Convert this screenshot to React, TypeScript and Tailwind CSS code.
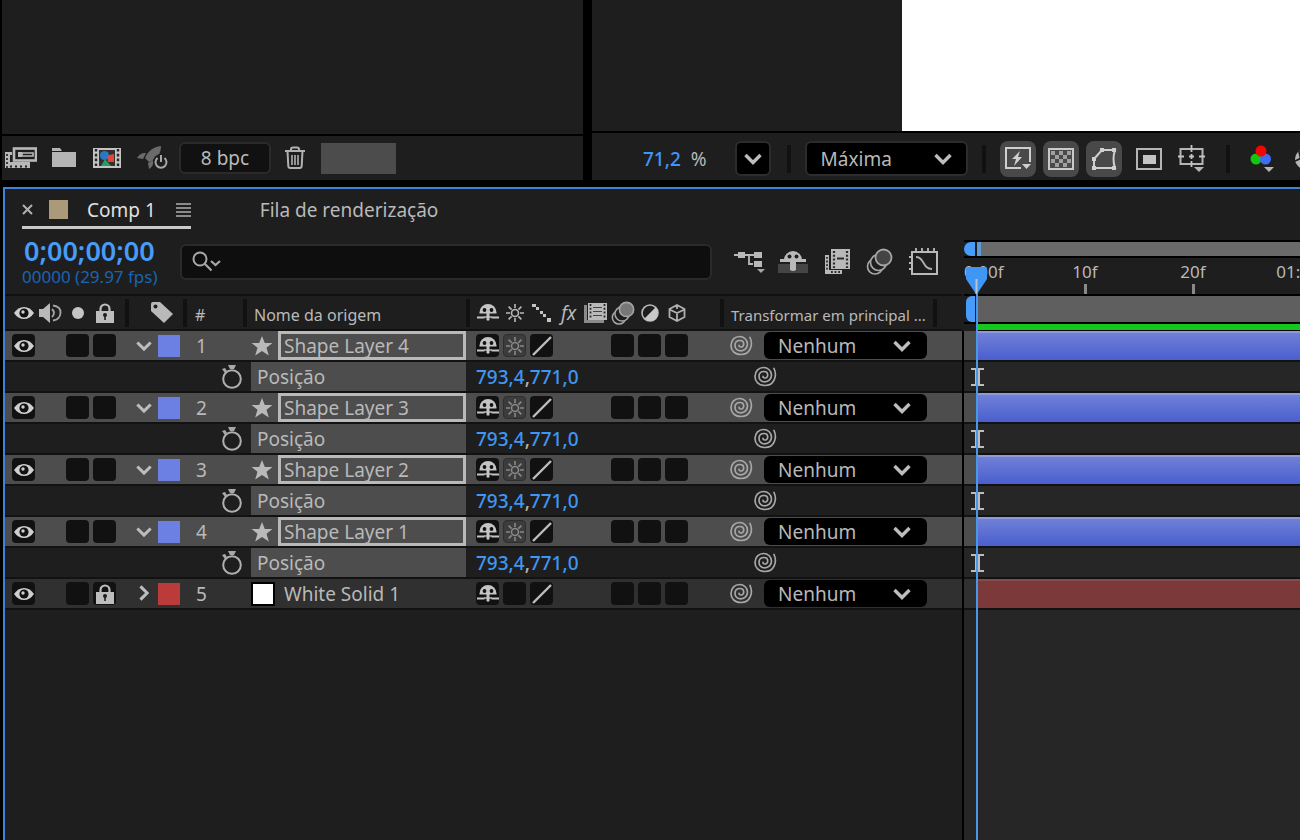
import type { ReactNode } from "react";
import { clsx } from "clsx";

type Layer = {
  id: number;
  name: string;
  kind: "shape" | "solid";
  locked?: boolean;
  position?: [string, string];
};

const LAYERS: Layer[] = [
  { id: 1, name: "Shape Layer 4", kind: "shape", position: ["793,4", "771,0"] },
  { id: 2, name: "Shape Layer 3", kind: "shape", position: ["793,4", "771,0"] },
  { id: 3, name: "Shape Layer 2", kind: "shape", position: ["793,4", "771,0"] },
  { id: 4, name: "Shape Layer 1", kind: "shape", position: ["793,4", "771,0"] },
  { id: 5, name: "White Solid 1", kind: "solid", locked: true },
];

/* ---------- icons ---------- */

function Icon({ w, h, children }: { w: number; h: number; children: ReactNode }) {
  return (
    <svg width={w} height={h} viewBox={`0 0 ${w} ${h}`} fill="none" className="shrink-0" aria-hidden="true">
      {children}
    </svg>
  );
}

function InterpretIcon() {
  return (
    <Icon w={32} h={22}>
      <path d="M0 5h7v3H5v7h3v4H0zM0 15h25v6H0z" fill="#b9b9b9" />
      <path d="M2 7v14" stroke="#1e1e1e" strokeWidth="1.600" strokeDasharray="2 2" />
      <path d="M5 19.500h18" stroke="#1e1e1e" strokeWidth="2" strokeDasharray="2 3" />
      <rect x="9" y="1.500" width="22" height="12" fill="#1e1e1e" stroke="#b9b9b9" strokeWidth="2.600" />
      <path d="M13 5h4v5h-4z" fill="#b9b9b9" />
      <path d="M17 6h11v3H17z" stroke="#b9b9b9" strokeWidth="1.600" />
    </Icon>
  );
}

function FolderIcon() {
  return (
    <Icon w={26} h={20}>
      <path d="M1 0h8l2 3H1zM1 4h24v15H1z" fill="#b5b5b5" />
    </Icon>
  );
}

function NewCompIcon() {
  return (
    <Icon w={28} h={20}>
      <path d="M0 0h28v20H0z" fill="#c4c4c4" />
      <path d="M3 1v18M25 1v18" stroke="#252525" strokeWidth="2.400" strokeDasharray="2.600 2.200" />
      <path d="M6 2h16v16H6z" fill="#303030" />
      <path d="M12 11l6 7H8z" fill="#1fa06a" />
      <circle cx="11.500" cy="7.500" r="4.600" fill="#2b78c2" />
      <path d="M14 7.500l7-1.500v8h-6z" fill="#e2463a" />
    </Icon>
  );
}

function RocketIcon() {
  return (
    <Icon w={32} h={26}>
      <path d="M24 1c-8 1-13 5-16 12l4 4c8-3 12-8 12-16z" fill="#6b6b6b" />
      <path d="M9 8c-5 0-7 2-9 5l6 1zM11 18l5-3c1 5-1 7-4 9z" fill="#6b6b6b" />
      <circle cx="24" cy="17" r="8" fill="#1e1e1e" />
      <path d="M20.500 13a5.500 5.500 0 1 0 7 0M24 10v7" stroke="#a8a8a8" strokeWidth="2" />
    </Icon>
  );
}

function TrashIcon() {
  return (
    <Icon w={20} h={24}>
      <path d="M0 5h20M6 5V3q0-1.500 2-1.500h4q2 0 2 1.500v2M2.500 5l.8 15q.1 2 2 2h9.400q1.900 0 2-2l.8-15" stroke="#b0b0b0" strokeWidth="2" />
      <path d="M7 9v10M10 9v10M13 9v10" stroke="#b0b0b0" strokeWidth="1.600" />
    </Icon>
  );
}

function Chevron({ w = 18 }: { w?: number }) {
  return (
    <svg width={w} height={12} viewBox="0 0 18 12" fill="none" className="shrink-0" aria-hidden="true">
      <path d="M1.500 2l7.500 7.500L16.500 2" stroke="#bdbdbd" strokeWidth="3.400" />
    </svg>
  );
}

function FastPreviewIcon() {
  return (
    <Icon w={28} h={26}>
      <path d="M17 22H2V2h24v14" stroke="#cfcfcf" strokeWidth="2" />
      <path d="M16 5l-8 8h4l-2 7 8-9h-4z" fill="#cfcfcf" />
      <path d="M18 18h9l-4.500 5z" fill="#cfcfcf" />
    </Icon>
  );
}

function CheckerIcon() {
  return (
    <Icon w={26} h={22}>
      <rect x="1" y="1" width="24" height="20" fill="#4a4a4a" stroke="#c9c9c9" strokeWidth="2" />
      <path
        d="M3 3h4v4H3zM11 3h4v4h-4zM19 3h4v4h-4zM7 7h4v4H7zM15 7h4v4h-4zM3 11h4v4H3zM11 11h4v4h-4zM19 11h4v4h-4zM7 15h4v4H7zM15 15h4v4h-4z"
        fill="#a0a0a0"
      />
    </Icon>
  );
}

function MaskIcon() {
  return (
    <Icon w={26} h={24}>
      <path d="M3 21V12L11 3h13q-3 9 0 18z" stroke="#cfcfcf" strokeWidth="2" />
      <path d="M1 10h4v4H1zM9 1h4v4H9zM21 1h4v4h-4zM1 19h4v4H1zM21 19h4v4h-4z" fill="#cfcfcf" />
    </Icon>
  );
}

function RegionIcon() {
  return (
    <Icon w={26} h={22}>
      <rect x="1" y="1" width="24" height="20" stroke="#b5b5b5" strokeWidth="2" />
      <path d="M7 7h13v9H7z" fill="#c4c4c4" />
    </Icon>
  );
}

function GridGuideIcon() {
  return (
    <Icon w={28} h={28}>
      <rect x="2.500" y="4" width="22" height="15" stroke="#b5b5b5" strokeWidth="2" />
      <path d="M13.500 0v7M13.500 16v6M0 11.500h6M21 11.500h6M13.500 9v5M11 11.500h5" stroke="#c4c4c4" strokeWidth="1.800" />
      <path d="M16 22h10l-5 5z" fill="#b5b5b5" />
    </Icon>
  );
}

function ChannelsIcon() {
  return (
    <Icon w={24} h={28}>
      <circle cx="6" cy="14" r="5.500" fill="#12c60e" />
      <circle cx="15.500" cy="14" r="5.500" fill="#3f6df2" />
      <circle cx="11" cy="6" r="5.500" fill="#f40505" />
      <path d="M14 22h10l-5 5z" fill="#b5b5b5" />
    </Icon>
  );
}

function ApertureIcon() {
  return (
    <Icon w={22} h={22}>
      <circle cx="11" cy="11" r="10" fill="#b5b5b5" />
      <path d="M1 13l11-5M5 3l3 14M12 1l8 8" stroke="#1e1e1e" strokeWidth="1.800" />
    </Icon>
  );
}

function FlowIcon() {
  return (
    <Icon w={32} h={26}>
      <path d="M0 6h26M15 6v9h4" stroke="#b9b9b9" strokeWidth="1.800" />
      <path d="M4 3h7v6H4zM20 3h8v6h-8zM20 12h8v6h-8z" fill="#b9b9b9" />
      <path d="M23 20h8l-4 4z" fill="#a5a5a5" />
    </Icon>
  );
}

function ShyLargeIcon() {
  return (
    <Icon w={30} h={26}>
      <path d="M0 15h30v9H0z" fill="#454545" />
      <path d="M2 10h26v3H2z" fill="#b9b9b9" />
      <path d="M6 11a9 9 0 0 1 18 0z" fill="#b9b9b9" />
      <path d="M12 10h6v11q-3 2-6 0z" fill="#b9b9b9" />
      <circle cx="11.500" cy="7.500" r="2" fill="#1e1e1e" />
      <circle cx="18.500" cy="7.500" r="2" fill="#1e1e1e" />
    </Icon>
  );
}

function FrameBlendLargeIcon() {
  return (
    <Icon w={26} h={26}>
      <path d="M1 6h4v15h13v4H1z" fill="#b9b9b9" />
      <path d="M3 8v14M7 23h10" stroke="#2a2a2a" strokeWidth="1.800" strokeDasharray="1.800 1.800" />
      <path d="M7 0h19v20H7z" fill="#b9b9b9" />
      <path d="M10 2v17M23 2v17" stroke="#2a2a2a" strokeWidth="2.200" strokeDasharray="2 1.800" />
      <path d="M13 9.500h7" stroke="#2a2a2a" strokeWidth="2" />
    </Icon>
  );
}

function MotionBlurIcon({ size = 27 }: { size?: number }) {
  return (
    <svg width={size} height={size} viewBox="0 0 27 27" fill="none" className="shrink-0" aria-hidden="true">
      <circle cx="9" cy="18.500" r="7.500" fill="#1e1e1e" stroke="#a5a5a5" strokeWidth="1.700" />
      <circle cx="12.500" cy="14.500" r="8" fill="#1e1e1e" stroke="#a5a5a5" strokeWidth="1.700" />
      <circle cx="17.500" cy="9.500" r="8" fill={size > 25 ? "#444444" : "#777777"} stroke="#a5a5a5" strokeWidth="1.800" />
    </svg>
  );
}

function GraphIcon() {
  return (
    <Icon w={30} h={28}>
      <path d="M3 4h25v22H3z" stroke="#b9b9b9" strokeWidth="2" />
      <path d="M7 0v4M13 0v4M19 0v4M25 0v4M0 9h3M0 15h3M0 21h3" stroke="#b9b9b9" strokeWidth="1.800" />
      <path d="M7 9c9 0 6 12 16 12" stroke="#b0b0b0" strokeWidth="1.800" />
    </Icon>
  );
}

function EyeIcon() {
  return (
    <Icon w={20} h={14}>
      <path d="M0 7q4-6 10-6t10 6q-4 6-10 6T0 7z" fill="#cfcfcf" />
      <circle cx="10" cy="7" r="4.600" fill="#111111" />
      <circle cx="9" cy="6" r="1.700" fill="#cfcfcf" />
    </Icon>
  );
}

function SpeakerIcon() {
  return (
    <Icon w={23} h={20}>
      <path d="M0 6h4l7-6v20l-7-6H0z" fill="#b9b9b9" />
      <path d="M13 6q4 4 0 8M14 2.500q8 1 7.500 7.500T14 17.500" stroke="#a5a5a5" strokeWidth="1.800" />
    </Icon>
  );
}

function LockIcon() {
  return (
    <Icon w={18} h={20}>
      <path d="M4.500 9V6a4.500 4.500 0 0 1 9 0v3" stroke="#bdbdbd" strokeWidth="2.200" />
      <path d="M0 8h18v12H0z" fill="#bdbdbd" />
      <circle cx="9" cy="12" r="2" fill="#1e1e1e" />
      <path d="M8.200 12h1.600v5H8.200z" fill="#1e1e1e" />
    </Icon>
  );
}

function TagIcon() {
  return (
    <Icon w={22} h={22}>
      <path d="M0 2q0-2 2-2h7l13 12-9 9L0 9z" fill="#b9b9b9" />
      <circle cx="4.500" cy="4.500" r="2" fill="#1e1e1e" />
    </Icon>
  );
}

function ShyIcon() {
  return (
    <Icon w={22} h={18}>
      <path d="M2.500 8.500a8.500 8.500 0 0 1 17 0v1h-17z" fill="#c4c4c4" />
      <path d="M0 13.500h7.500M14.500 13.500H22" stroke="#c4c4c4" strokeWidth="2" />
      <path d="M7 13h8" stroke="#c4c4c4" strokeWidth="1.400" />
      <path d="M9.500 7h3v9q-1.500 1.500-3 0z" fill="#c4c4c4" />
      <circle cx="7.500" cy="6" r="1.900" fill="#111111" />
      <circle cx="14.500" cy="6" r="1.900" fill="#111111" />
    </Icon>
  );
}

function SunIcon({ dim }: { dim?: boolean }) {
  return (
    <Icon w={18} h={18}>
      <g stroke={dim ? "#888888" : "#b9b9b9"} strokeWidth="1.600">
        <circle cx="9" cy="9" r="3.500" />
        <path d="M9 0v4M9 14v4M0 9h4M14 9h4M2.600 2.600l3 3M12.400 12.400l3 3M2.600 15.400l3-3M12.400 5.600l3-3" />
      </g>
    </Icon>
  );
}

function DottedIcon() {
  return (
    <Icon w={20} h={18}>
      <path d="M0 0h4v3H0zM4 3h3v3H4zM8 7h3v3H8zM11 10h3v3h-3zM15 14h4v4h-4z" fill="#c4c4c4" />
    </Icon>
  );
}

function FrameBlendIcon() {
  return (
    <Icon w={23} h={20}>
      <path d="M0 2h3v15h17v3H0z" fill="#8a8a8a" />
      <path d="M4 0h19v17H4z" fill="#b9b9b9" />
      <path d="M6.500 1v15M20.500 1v15" stroke="#2a2a2a" strokeWidth="1.800" strokeDasharray="2 1.800" />
      <path d="M9 4.500h9M9 8.500h9M9 12.500h9" stroke="#444444" strokeWidth="1.200" />
    </Icon>
  );
}

function AdjustmentIcon() {
  return (
    <Icon w={18} h={18}>
      <circle cx="9" cy="9" r="8" stroke="#b9b9b9" strokeWidth="1.600" />
      <path d="M3.300 14.700A8 8 0 0 0 14.700 3.300z" fill="#c9c9c9" />
    </Icon>
  );
}

function CubeIcon() {
  return (
    <Icon w={18} h={18}>
      <path d="M9 1l7.500 4v8L9 17l-7.500-4V5zM1.500 5.500L9 9l7.500-3.500M9 9v8M9 1v4" stroke="#b0b0b0" strokeWidth="1.800" />
    </Icon>
  );
}

function SpiralIcon() {
  return (
    <Icon w={23} h={21}>
      <path
        d="M20 2.500C23.500 10 20 19.500 11 19.500 4.500 19.500 1 15.500 1 10.500 1 5 5 1.500 9.500 1.500 14 1.500 17.500 5 17.500 9 17.500 13 14.500 15.800 11 15.800 7.500 15.800 5 13.500 5 10.500 5 7.500 7 5.500 10 5.500 12.300 5.500 13.700 7.200 13.700 9 13.700 11 12.200 12.100 10.500 12 9.500 11.900 9 11.200 9 10.300"
        stroke="#a8a8a8"
        strokeWidth="1.700"
        strokeLinecap="round"
      />
    </Icon>
  );
}

function StopwatchIcon() {
  return (
    <Icon w={22} h={26}>
      <circle cx="11" cy="15" r="8.800" stroke="#b0b0b0" strokeWidth="2" />
      <path d="M7 1h8l-2 4h-4zM1 5l3-1 2 3-2 2z" fill="#a8a8a8" />
    </Icon>
  );
}

function StarIcon() {
  return (
    <Icon w={22} h={22}>
      <path d="M11 1l2.800 7H21.500l-6 4.800L17.800 20.500 11 16 4.200 20.500l2.300-7.700L.5 8h7.700z" fill="#b9b9b9" />
    </Icon>
  );
}

/* ---------- small shared pieces ---------- */

function Divider() {
  return <span className="h-7 w-1 shrink-0 bg-[#111111]" />;
}

function Cell({ children }: { children?: ReactNode }) {
  return <span className="flex w-[27px] shrink-0 items-center justify-center">{children}</span>;
}

function Toggle({ label, dim, children }: { label: string; dim?: boolean; children?: ReactNode }) {
  return (
    <Cell>
      <button
        type="button"
        aria-label={label}
        className={clsx(
          "flex size-[23px] items-center justify-center rounded-sm",
          dim ? "border border-[#2e2e2e] bg-[#3c3c3c]" : "bg-[#111111]",
        )}
      >
        {children}
      </button>
    </Cell>
  );
}

/* ---------- top panels ---------- */

function ProjectPanel() {
  return (
    <section className="flex flex-col bg-[#1e1e1e]">
      <div className="h-[134px]" />
      <div className="flex flex-1 items-center border-t-2 border-black pl-[3px]">
        <button type="button" aria-label="Interpretar gravação">
          <InterpretIcon />
        </button>
        <button type="button" aria-label="Nova pasta" className="ml-3.5">
          <FolderIcon />
        </button>
        <button type="button" aria-label="Nova composição" className="ml-4">
          <NewCompIcon />
        </button>
        <button type="button" aria-label="Aceleração" className="ml-4">
          <RocketIcon />
        </button>
        <button type="button" className="ml-2.5 h-8 w-[92px] rounded-md border-2 border-[#2a2a2a] bg-[#111111] leading-6">
          8 bpc
        </button>
        <button type="button" aria-label="Excluir" className="ml-3.5">
          <TrashIcon />
        </button>
        <span className="ml-4 h-[31px] w-[75px] bg-[#4c4c4c]" />
      </div>
    </section>
  );
}

function ViewerPanel() {
  return (
    <section className="flex flex-col overflow-hidden bg-[#1e1e1e]">
      <div className="flex h-[131px]">
        <div className="w-[310px] shrink-0" />
        <div className="flex-1 bg-white" />
      </div>
      <div className="flex flex-1 items-center whitespace-nowrap border-t-2 border-black pl-[51px] pt-1">
        <span className="font-medium text-[#3f96f5]">71,2</span>
        <span className="ml-2.5 w-[18px]">%</span>
        <button
          type="button"
          aria-label="Ampliação"
          className="ml-7 flex h-[35px] w-9 shrink-0 items-center justify-center rounded-md border-2 border-[#2c2c2c] bg-black"
        >
          <Chevron />
        </button>
        <span className="ml-4 flex">
          <Divider />
        </span>
        <span className="relative ml-3.5 flex w-[163px] shrink-0 items-center">
          <select
            aria-label="Resolução"
            className="h-[35px] w-full appearance-none rounded-md border-2 border-[#2c2c2c] bg-black px-3.5"
          >
            <option>Máxima</option>
          </select>
          <span className="pointer-events-none absolute right-4">
            <Chevron />
          </span>
        </span>
        <span className="ml-3.5 flex">
          <Divider />
        </span>
        <span className="ml-3.5 flex items-center gap-[7px]">
          {[
            { label: "Visualização rápida", icon: <FastPreviewIcon /> },
            { label: "Grade de transparência", icon: <CheckerIcon /> },
            { label: "Máscara e forma", icon: <MaskIcon /> },
          ].map((b) => (
            <button
              key={b.label}
              type="button"
              aria-label={b.label}
              className="flex size-9 items-center justify-center rounded-lg bg-[#494949]"
            >
              {b.icon}
            </button>
          ))}
        </span>
        <button type="button" aria-label="Região de interesse" className="ml-3.5">
          <RegionIcon />
        </button>
        <button type="button" aria-label="Grade e guias" className="ml-4">
          <GridGuideIcon />
        </button>
        <span className="ml-5 flex">
          <Divider />
        </span>
        <button type="button" aria-label="Canais" className="ml-5">
          <ChannelsIcon />
        </button>
        <button type="button" aria-label="Exposição" className="ml-5">
          <ApertureIcon />
        </button>
      </div>
    </section>
  );
}

/* ---------- timeline ---------- */

function TimelineTabs() {
  return (
    <nav className="flex h-11 pl-[17px]">
      <div className="flex h-10 items-center border-b-[3px] border-[#c9c9c9] pt-1">
        <button type="button" aria-label="Fechar">
          <Icon w={11} h={11}>
            <path d="M1 1l9 9M10 1l-9 9" stroke="#b0b0b0" strokeWidth="2" />
          </Icon>
        </button>
        <span className="ml-4 size-[19px] bg-[#ab9a7a]" />
        <a href="#comp" className="ml-[19px] text-[#e0e0e0]">
          Comp 1
        </a>
        <button type="button" aria-label="Menu do painel" className="ml-5">
          <Icon w={15} h={14}>
            <path d="M0 1h15M0 5h15M0 9h15M0 13h15" stroke="#b0b0b0" strokeWidth="1.600" />
          </Icon>
        </button>
      </div>
      <a href="#render" className="ml-[69px] flex h-10 items-center border-b-[3px] border-transparent pt-1">
        Fila de renderização
      </a>
    </nav>
  );
}

function TimelineTools() {
  return (
    <div className="flex h-[63px] items-center border-b-2 border-[#111111] pb-1 pr-[23px]">
      <div className="w-[175px] shrink-0 whitespace-nowrap pl-[17px] pt-0.5">
        <div className="pl-0.5 text-[27px] font-semibold leading-7 text-[#469cf8]">0;00;00;00</div>
        <div className="text-[17px] leading-6 text-[#1a64b4]">00000 (29.97 fps)</div>
      </div>
      <label className="flex h-9 flex-1 items-center rounded-md border-2 border-[#2a2a2a] bg-[#0e0e0e] pl-2.5">
        <Icon w={30} h={22}>
          <circle cx="8" cy="8" r="6.500" stroke="#a8a8a8" strokeWidth="2" />
          <path d="M12.500 12.500l7 7M19 10l4.500 4 4.500-4" stroke="#a8a8a8" strokeWidth="2.200" />
        </Icon>
        <input type="text" aria-label="Pesquisar" className="ml-2 min-w-0 flex-1 bg-transparent outline-none" />
      </label>
      <div className="ml-[22px] flex shrink-0 items-center gap-3">
        <button type="button" aria-label="Minifluxograma">
          <FlowIcon />
        </button>
        <button type="button" aria-label="Ocultar tímidas">
          <ShyLargeIcon />
        </button>
        <button type="button" aria-label="Mesclagem de quadros" className="ml-1">
          <FrameBlendLargeIcon />
        </button>
        <button type="button" aria-label="Desfoque de movimento" className="ml-1">
          <MotionBlurIcon />
        </button>
        <button type="button" aria-label="Editor de gráfico" className="ml-1">
          <GraphIcon />
        </button>
      </div>
    </div>
  );
}

const HEAD = "h-[35px] border-b-2 border-[#111111] p-0 text-left font-normal";

function LayerHead() {
  return (
    <thead className="text-base leading-6">
      <tr>
        <th className={HEAD}>
          <div className="flex items-center pl-[5px]">
            <Cell><EyeIcon /></Cell>
            <Cell><SpeakerIcon /></Cell>
            <Cell>
              <span className="size-3 rounded-full bg-[#c4c4c4]" />
            </Cell>
            <Cell><LockIcon /></Cell>
          </div>
        </th>
        <th className={HEAD}>
          <div className="flex items-center gap-[22px]">
            <Divider />
            <TagIcon />
          </div>
        </th>
        <th className={HEAD}>
          <div className="flex items-center gap-2">
            <Divider />
            <span className="pt-1">#</span>
          </div>
        </th>
        <th className={HEAD}>
          <div className="flex items-center gap-[7px]">
            <Divider />
            <span className="pt-1">Nome da origem</span>
          </div>
        </th>
        <th className={HEAD}>
          <div className="flex items-center">
            <Divider />
            <div className="flex items-center pl-1">
              <Cell><ShyIcon /></Cell>
              <Cell><SunIcon /></Cell>
              <Cell><DottedIcon /></Cell>
              <Cell><span className="text-[19px] italic">fx</span></Cell>
              <Cell><FrameBlendIcon /></Cell>
              <Cell><MotionBlurIcon size={24} /></Cell>
              <Cell><AdjustmentIcon /></Cell>
              <Cell><CubeIcon /></Cell>
            </div>
          </div>
        </th>
        <th className={HEAD}>
          <div className="flex items-center gap-[7px] whitespace-nowrap text-[15px]">
            <Divider />
            <span className="pt-1">Transformar em principal ...</span>
            <Divider />
          </div>
        </th>
      </tr>
    </thead>
  );
}

function LayerRow({ layer }: { layer: Layer }) {
  const shape = layer.kind === "shape";
  const td = "h-[31px] border-b-2 border-[#121212] p-0";
  return (
    <>
      <tr className={shape ? "bg-[#4d4d4d]" : "bg-[#303030]"}>
        <td className={td}>
          <div className="flex pl-[5px]">
            <Toggle label="Visível"><EyeIcon /></Toggle>
            <Cell />
            <Toggle label="Solo" />
            <Toggle label="Bloquear">{layer.locked && <LockIcon />}</Toggle>
          </div>
        </td>
        <td className={td}>
          <div className="flex items-center pl-2.5">
            <button
              type="button"
              aria-label="Expandir"
              className={clsx("flex w-[18px]", shape ? "justify-center" : "-rotate-90 justify-end")}
            >
              <Chevron w={16} />
            </button>
            <span className={clsx("ml-[5px] size-[22px]", shape ? "bg-[#6c80e4]" : "bg-[#bb3a3a]")} />
          </div>
        </td>
        <td className={clsx(td, "pl-[13px]")}>{layer.id}</td>
        <td className={td}>
          <div className="flex h-[29px] items-center pl-2">
            {shape ? <StarIcon /> : <span className="size-6 border-2 border-black bg-white" />}
            <span
              className={clsx(
                "ml-[5px] flex h-[29px] flex-1 items-center",
                shape ? "border-[3px] border-[#b9b9b9] pl-[3px]" : "pl-1",
              )}
            >
              {layer.name}
            </span>
          </div>
        </td>
        <td className={td}>
          <div className="flex pl-2">
            <Toggle label="Tímida"><ShyIcon /></Toggle>
            {shape ? <Toggle label="Recolher" dim><SunIcon dim /></Toggle> : <Toggle label="Recolher" />}
            <Toggle label="Qualidade">
              <Icon w={20} h={20}>
                <path d="M1 19L19 1" stroke="#bdbdbd" strokeWidth="2.400" />
              </Icon>
            </Toggle>
            <Cell />
            <Cell />
            <Toggle label="Desfoque de movimento" />
            <Toggle label="Camada de ajuste" />
            <Toggle label="Camada 3D" />
          </div>
        </td>
        <td className={td}>
          <div className="flex items-center pl-2.5">
            <SpiralIcon />
            <span className="relative ml-[11px] flex w-[163px] items-center">
              <select
                aria-label={`Principal de ${layer.name}`}
                className="h-[27px] w-full appearance-none rounded-md bg-black px-3.5 leading-6"
              >
                <option>Nenhum</option>
              </select>
              <span className="pointer-events-none absolute right-4">
                <Chevron />
              </span>
            </span>
          </div>
        </td>
      </tr>
      {layer.position && (
        <tr>
          <td className={td} />
          <td className={td} />
          <td className={td}>
            <div className="flex items-center gap-[19px] pl-[19px]">
              <span className="size-0.5 bg-[#3a3a3a]" />
              <StopwatchIcon />
            </div>
          </td>
          <td className={td}>
            <div className="ml-2 flex h-[29px] items-center bg-[#4d4d4d] pl-1.5">Posição</div>
          </td>
          <td className={clsx(td, "pl-2.5 font-medium text-[#3f96f5]")}>
            {layer.position[0]}
            <span className="text-[#c4b0a0]">,</span>
            {layer.position[1]}
          </td>
          <td className={clsx(td, "pl-[34px]")}>
            <SpiralIcon />
          </td>
        </tr>
      )}
    </>
  );
}

function LayerTable() {
  return (
    <table className="w-full table-fixed border-separate border-spacing-0">
      <colgroup>
        <col className="w-[120px]" />
        <col className="w-[58px]" />
        <col className="w-[60px]" />
        <col className="w-[223px]" />
        <col className="w-[254px]" />
        <col />
      </colgroup>
      <LayerHead />
      <tbody>
        {LAYERS.map((l) => (
          <LayerRow key={l.id} layer={l} />
        ))}
      </tbody>
    </table>
  );
}

function Ruler() {
  return (
    <div className="flex h-9 overflow-hidden whitespace-nowrap text-[17px] leading-6">
      <div className="w-[67px] shrink-0 pt-0.5">0:00f</div>
      {["10f", "20f", "01:00f"].map((t) => (
        <div key={t} className="flex w-[108px] shrink-0 flex-col items-center pt-0.5">
          {t}
          <span className="h-2.5 w-[3px] bg-[#8a8a8a]" />
        </div>
      ))}
    </div>
  );
}

function Tracks() {
  return (
    <div className="relative flex min-w-0 flex-col overflow-hidden bg-[#262626]">
      <div className="bg-[#1e1e1e] pl-0.5 pt-[7px]">
        <div className="flex h-[18px] border-y-2 border-black">
          <span className="w-[11px] rounded-l-full bg-[#469cf8]" />
          <span className="ml-0.5 flex-1 border-l-4 border-[#5f9ad8] bg-[#6a6a6a]" />
        </div>
        <Ruler />
        <div className="flex h-[30px] border-y-2 border-black">
          <span className="ml-0.5 w-[9px] rounded-l-md bg-[#469cf8]" />
          <span className="ml-0.5 flex-1 bg-[#5f5f5f]" />
        </div>
        <div className="ml-[13px] h-[7px] border-b border-black bg-[#14c81e]" />
      </div>
      <div className="flex-1 border-l-2 border-black">
        {LAYERS.map((l) => (
          <div key={l.id}>
            <div
              className={clsx(
                "h-[31px] border-b-2 border-[#121212] pl-[13px]",
                l.kind === "shape" ? "bg-[#4d4d4d]" : "bg-[#303030]",
              )}
            >
              <div
                className={clsx(
                  "h-[29px] border-t-2",
                  l.kind === "shape"
                    ? "border-[#8e98dc] bg-linear-to-b from-[#7080d6] to-[#4a5ecf]"
                    : "border-[#8a4a4a] bg-[#7b393a]",
                )}
              />
            </div>
            {l.position && (
              <div className="flex h-[31px] items-center border-b-2 border-[#121212] pl-[7px]">
                <Icon w={13} h={18}>
                  <path d="M0 1h13M0 17h13" stroke="#bdbdbd" strokeWidth="2" />
                  <path d="M6.500 1v16" stroke="#bdbdbd" strokeWidth="5" />
                </Icon>
              </div>
            )}
          </div>
        ))}
      </div>
      {/* current time indicator */}
      <div className="absolute bottom-0 left-1 top-[34px] flex w-[21px] flex-col items-center">
        <Icon w={21} h={27}>
          <path d="M0 2q0-2 2-2h17q2 0 2 2v10L11 27h-1L0 12z" fill="#3f96f5" />
          <path d="M10.500 12v15" stroke="#b9c4d0" strokeWidth="2" />
        </Icon>
        <span className="w-0.5 flex-1 bg-[#4a97e8]" />
      </div>
    </div>
  );
}

export default function App() {
  return (
    <div className="flex min-h-screen flex-col overflow-hidden bg-black font-['Noto_Sans',sans-serif] text-[19px] leading-7 text-[#b9b9b9]">
      <div className="grid min-h-[180px] grid-cols-[581fr_708fr] gap-[9px] pl-0.5">
        <ProjectPanel />
        <ViewerPanel />
      </div>
      <section className="ml-[3px] mt-[7px] flex flex-1 flex-col border-l-2 border-t-2 border-[#3f83d8] bg-[#1e1e1e]">
        <TimelineTabs />
        <div className="grid flex-1 grid-cols-[957fr_338fr]">
          <div className="min-w-0">
            <TimelineTools />
            <LayerTable />
          </div>
          <Tracks />
        </div>
      </section>
    </div>
  );
}
